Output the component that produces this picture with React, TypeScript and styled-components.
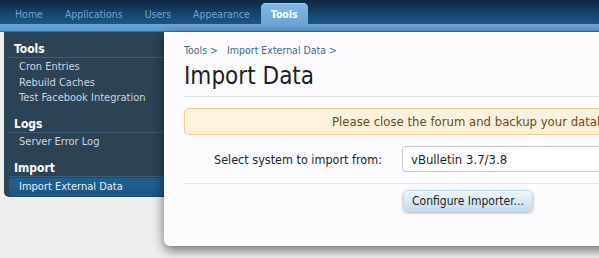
import { FC } from "react"
import styled, { createGlobalStyle } from "styled-components"

const GlobalStyle = createGlobalStyle`
  html, body {
    margin: 0;
    padding: 0;
    background: #eeeeee;
    font-family: "DejaVu Sans Condensed", "DejaVu Sans", "Liberation Sans", sans-serif;
    font-stretch: condensed;
  }
`

const tabs = ["Home", "Applications", "Users", "Appearance", "Tools"]

const sections = [
  { title: "Tools", items: ["Cron Entries", "Rebuild Caches", "Test Facebook Integration"] },
  { title: "Logs", items: ["Server Error Log"] },
  { title: "Import", items: ["Import External Data"] },
]

const App: FC = () => {
  return (
    <>
      <GlobalStyle />
      <Page>
        <Header>
          <TabBar>
            {tabs.map((t) => (
              <Tab key={t} $active={t === "Tools"}>
                {t}
              </Tab>
            ))}
          </TabBar>
          <SubStrip />
        </Header>
        <Body>
          <Sidebar>
            {sections.map((s) => (
              <Section key={s.title}>
                <SectionTitle>{s.title}</SectionTitle>
                {s.items.map((i) => (
                  <NavItem key={i} $selected={i === "Import External Data"}>
                    {i}
                  </NavItem>
                ))}
              </Section>
            ))}
          </Sidebar>
          <Content>
            <Breadcrumb>
              <Crumb>Tools &gt;</Crumb>
              <Crumb>Import External Data &gt;</Crumb>
            </Breadcrumb>
            <Title>Import Data</Title>
            <Notice>Please close the forum and backup your database before importing.</Notice>
            <FormRow>
              <Label>Select system to import from:</Label>
              <Select>vBulletin 3.7/3.8</Select>
            </FormRow>
            <SubmitRow>
              <Button>Configure Importer...</Button>
            </SubmitRow>
          </Content>
        </Body>
      </Page>
    </>
  )
}

export default App

const Page = styled.div`
  width: 599px;
  height: 258px;
  overflow: hidden;
  display: flex;
  flex-direction: column;
  background: #eeeeee;
`

const Header = styled.div`
  display: flex;
  flex-direction: column;
  flex-shrink: 0;
`

const TabBar = styled.div`
  height: 24px;
  display: flex;
  align-items: flex-end;
  padding-left: 4px;
  background: linear-gradient(to bottom, #0c2741 0%, #15476f 60%, #1a5884 100%);
`

const Tab = styled.div<{ $active: boolean }>`
  height: 21px;
  display: flex;
  align-items: center;
  padding: 0 ${({ $active }) => ($active ? "10px" : "11px")};
  font-size: 10.5px;
  font-weight: ${({ $active }) => ($active ? 700 : 400)};
  color: ${({ $active }) => ($active ? "#ffffff" : "#6ea3cf")};
  border-radius: 5px 5px 0 0;
  background: ${({ $active }) =>
    $active ? "linear-gradient(to bottom, #7fb8e4, #6aa6d8)" : "transparent"};
  box-shadow: ${({ $active }) => ($active ? "inset 0 1px 0 #9fcbee" : "none")};
`

const SubStrip = styled.div`
  height: 7px;
  background: linear-gradient(to bottom, #6aa6d8, #5f9bcf);
  border-bottom: 1px solid #3d6f9c;
`

const Body = styled.div`
  flex: 1;
  display: flex;
  align-items: flex-start;
  padding-left: 4px;
`

const Sidebar = styled.div`
  width: 160px;
  height: 165px;
  flex-shrink: 0;
  box-sizing: border-box;
  padding: 10px 0 0 5px;
  background: #2c4255;
  border-bottom-left-radius: 5px;
  display: flex;
  flex-direction: column;
  gap: 11.5px;
`

const Section = styled.div`
  display: flex;
  flex-direction: column;
`

const SectionTitle = styled.div`
  font-size: 12px;
  line-height: 14px;
  font-weight: 700;
  color: #ffffff;
  padding: 0 0 1px 5px;
  border-bottom: 1px solid #3e5d77;
  margin-bottom: 1px;
`

const NavItem = styled.div<{ $selected: boolean }>`
  font-size: 11px;
  line-height: 15.5px;
  padding: ${({ $selected }) => ($selected ? "1px 0 1px 10px" : "0 0 0 10px")};
  color: ${({ $selected }) => ($selected ? "#e4eef7" : "#c9d7e3")};
  background: ${({ $selected }) =>
    $selected ? "linear-gradient(to bottom, #1f6193, #1a5686)" : "transparent"};
  border-radius: ${({ $selected }) => ($selected ? "3px 0 0 3px" : "0")};
`

const Content = styled.div`
  flex: 1;
  height: 214px;
  box-sizing: border-box;
  padding: 10px 0 0 20px;
  background: #fcfcff;
  border-bottom-left-radius: 6px;
  box-shadow: 0 4px 12px rgba(0, 0, 0, 0.55);
  position: relative;
  display: flex;
  flex-direction: column;
`

const Breadcrumb = styled.div`
  display: flex;
  gap: 9px;
  font-size: 10.5px;
  color: #3d6888;
  padding-top: 2px;
`

const Crumb = styled.span``

const Title = styled.h1`
  margin: 0;
  padding: 6px 0 6px;
  font-size: 24px;
  font-weight: 400;
  color: #1e1e1e;
  border-bottom: 1px solid #d4e6ef;
`

const Notice = styled.div`
  margin-top: 11px;
  height: 27px;
  box-sizing: border-box;
  display: flex;
  align-items: center;
  padding-left: 147px;
  white-space: nowrap;
  overflow: hidden;
  font-size: 13px;
  color: #694a1b;
  background: #fdf1dd;
  border: 1px solid #eacb8f;
  border-right: none;
  border-radius: 5px 0 0 5px;
`

const FormRow = styled.div`
  display: flex;
  align-items: center;
  padding: 11px 0 11px 30px;
  border-bottom: 1px solid #dcebf2;
`

const Label = styled.div`
  white-space: nowrap;
  font-size: 12.5px;
  color: #222222;
  margin-right: 20px;
`

const Select = styled.div`
  flex: 1;
  height: 26px;
  box-sizing: border-box;
  display: flex;
  align-items: center;
  padding-left: 8px;
  font-size: 13px;
  color: #1e1e1e;
  background: #ffffff;
  border: 1px solid #c8c8c8;
  border-right: none;
  border-radius: 4px 0 0 4px;
`

const SubmitRow = styled.div`
  display: flex;
  padding: 6px 0 0 219px;
`

const Button = styled.div`
  height: 22px;
  box-sizing: border-box;
  display: flex;
  align-items: center;
  padding: 0 8px;
  font-size: 12px;
  color: #1e1e1e;
  background: linear-gradient(to bottom, #eef5fb 0%, #d7e7f5 60%, #c3daef 100%);
  border: 1px solid #c9dcec;
  border-radius: 5px;
  box-shadow: 0 1px 3px rgba(0, 0, 0, 0.3);
`
